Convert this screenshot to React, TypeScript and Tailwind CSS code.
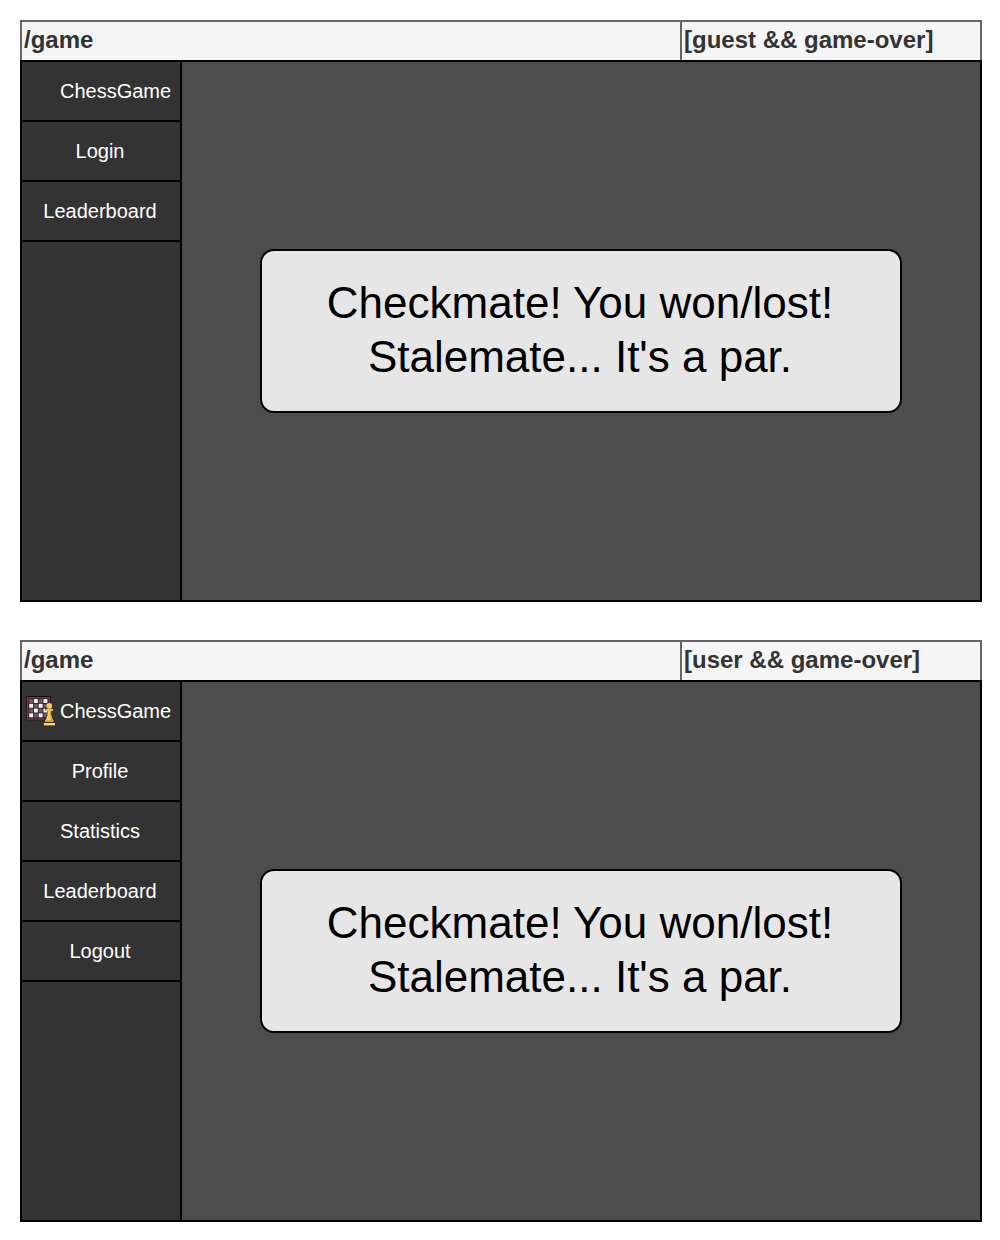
const cells = Array.from({ length: 16 }, (_, i) => ({ row: Math.floor(i / 4), col: i % 4 }));

function ChessIcon() {
  return (
    <svg viewBox="0 0 32 32" className="h-8 w-8 shrink-0">
      <rect x="0.5" y="1" width="24.5" height="24.2" rx="0.8" fill="#140b0c" />
      <rect x="1" y="2" width="23.2" height="22.8" fill="#6b3b3e" />
      <rect x="2.4" y="3.4" width="20.2" height="20" fill="#30222a" />
      {cells.map(({ row, col }) => (
        <rect
          key={`${row}-${col}`}
          x={3.2 + col * 4.75}
          y={4.1 + row * 4.75}
          width="3.9"
          height="3.9"
          fill={(row + col) % 2 ? '#f6f2f6' : '#655a6a'}
        />
      ))}
      <path
        d="M23.3 7.2a3.3 3.3 0 0 1 2 5.6h2.3v3h-2v4l1.6 3.6h1.4v3h1v4H17.4v-4h1v-3h1l1.7-3.6v-4h-2v-3h2.2a3.3 3.3 0 0 1 2-5.6z"
        fill="#3a2b20"
      />
      <circle cx="23.3" cy="10.9" r="2.9" fill="#f5cf5c" />
      <path d="M19.7 14h7.4v2h-7.4z" fill="#e9b94b" />
      <path d="M21.5 16h3.6v4l1.8 5h-7.2l1.8-5z" fill="#f1cb65" />
      <path d="M24 16h1.1v4l1.8 5h-2L24 20z" fill="#d0a048" />
      <path d="M19 25h8.6v2H19z" fill="#d9a43c" />
      <path d="M17.8 28h11.2v2.4H17.8z" fill="#fadb6b" />
    </svg>
  );
}

type ScreenProps = { state: string; items: string[]; logo?: boolean };

function Screen({ state, items, logo }: ScreenProps) {
  return (
    <section className="w-[962px]">
      <header className="flex h-10 border-2 border-b-0 border-[#666666] bg-[#f5f5f5] text-2xl leading-[36px] font-bold text-[#333333]">
        <div className="w-[658px] pl-[2px]">/game</div>
        <div className="flex-1 border-l-2 border-[#666666] pl-[2px]">{state}</div>
      </header>
      <div className="flex h-[542px] border-2 border-black bg-[#4d4d4d]">
        <nav className="w-[160px] border-r-2 border-black bg-[#333333] text-xl text-white">
          <div className="flex h-[60px] items-center border-b-2 border-black pl-1">
            <div className="h-8 w-8">{logo && <ChessIcon />}</div>
            <span className="pl-[2px]">ChessGame</span>
          </div>
          {items.map((item) => (
            <div key={item} className="flex h-[60px] items-center justify-center border-b-2 border-black pr-[2px]">
              {item}
            </div>
          ))}
        </nav>
        <main className="flex flex-1 items-center justify-center">
          <div className="flex h-[164px] w-[642px] flex-col items-center justify-center rounded-[14px] border-2 border-black bg-[#e6e6e6] pr-[2px] pb-[2px] text-[44px] leading-[54px] text-black">
            <p>Checkmate! You won/lost!</p>
            <p>Stalemate... It's a par.</p>
          </div>
        </main>
      </div>
    </section>
  );
}

export default function App() {
  return (
    <div className="flex h-[1240px] w-[1000px] flex-col gap-[38px] bg-white pt-5 pl-5 font-['Liberation_Sans',Arial,sans-serif]">
      <Screen state="[guest && game-over]" items={['Login', 'Leaderboard']} />
      <Screen state="[user && game-over]" items={['Profile', 'Statistics', 'Leaderboard', 'Logout']} logo />
    </div>
  );
}
